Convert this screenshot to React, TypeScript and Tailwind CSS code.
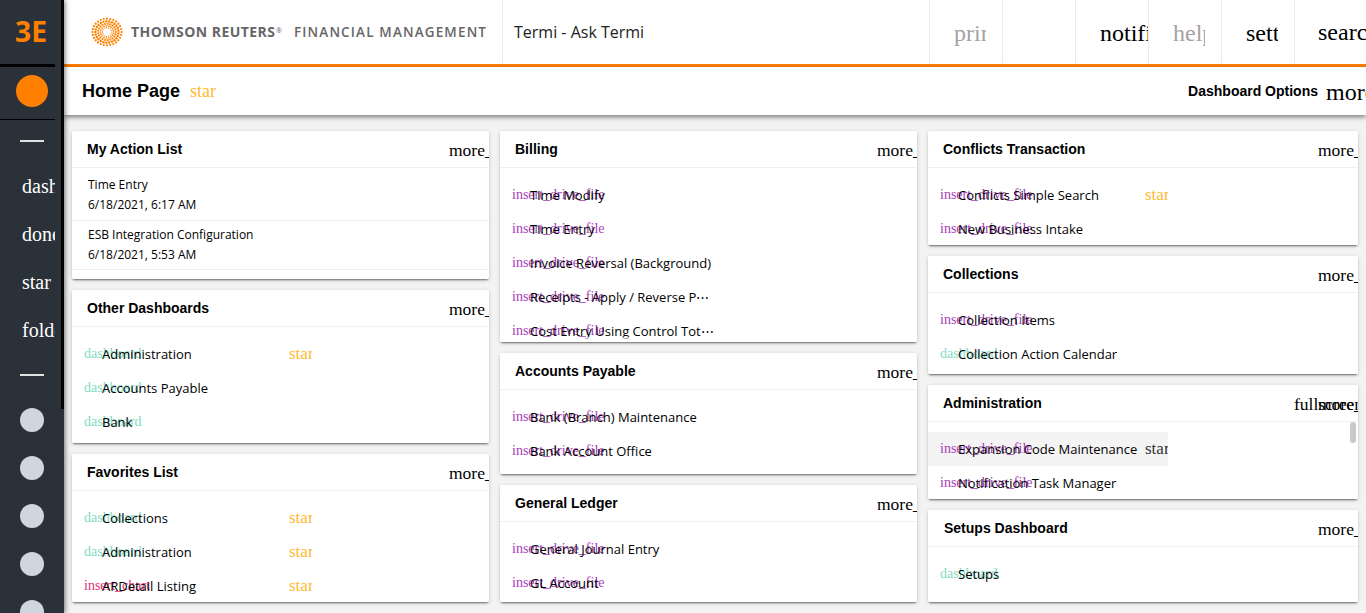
import React from "react";

type Kind = "dashboard" | "insert_drive_file" | "insert_chart";
type Item = { kind: Kind; label: string; star?: "gold" | "dark" };

const kindColor: Record<Kind, string> = {
  dashboard: "text-[#7fdcc4]",
  insert_drive_file: "text-[#a63db8]",
  insert_chart: "text-[#e0317c]",
};

const SERIF = "font-['Liberation_Serif',serif]";

function Card({
  title,
  height,
  children,
  fullscreen,
  nudge,
}: {
  title: string;
  height: string;
  children: React.ReactNode;
  fullscreen?: boolean;
  nudge?: boolean;
}) {
  return (
    <section
      className={`relative shrink-0 overflow-hidden rounded-[2px] bg-white ${height}`}
    >
      <header className="flex h-[37px] items-center justify-between overflow-hidden border-b border-[#f0f0f0] pl-[15px]">
        <h2
          className={`font-['Liberation_Sans',sans-serif] text-[14px] leading-[36px] font-bold ${nudge ? "pl-px" : ""}`}
        >
          {title}
        </h2>
        <div className={`flex text-[17.5px] leading-[18px] whitespace-nowrap pt-[2px] ${SERIF}`}>
          {fullscreen && <span className="w-6 overflow-visible">fullscreen</span>}
          <span className="w-10 overflow-hidden">more_vert</span>
        </div>
      </header>
      {children}
    </section>
  );
}

function Shadow({ children }: { children: React.ReactNode }) {
  return (
    <div className="rounded-[2px] shadow-[0_2px_2px_-1px_rgba(0,0,0,0.5),0_1px_4px_rgba(0,0,0,0.16)]">
      {children}
    </div>
  );
}

function Rows({ items }: { items: Item[] }) {
  return (
    <ul className="pt-[10px]">
      {items.map((it, i) => (
        <li
          key={i}
          className={`flex h-[34px] w-[240px] items-center overflow-hidden pl-[12px] whitespace-nowrap ${it.star === "dark" ? "bg-[#f4f4f4]" : ""}`}
        >
          <span
            className={`w-[18px] shrink-0 text-[14px] leading-[18px] ${SERIF} ${kindColor[it.kind]}`}
          >
            {it.kind}
          </span>
          <span className="relative w-[187px] shrink-0 pb-px text-[13px] leading-[18px]">
            {it.label}
          </span>
          {it.star && (
            <span
              className={`shrink-0 text-[17px] leading-[18px] ${SERIF} ${it.star === "gold" ? "text-[#ffb932]" : "text-[#333]"}`}
            >
              star
            </span>
          )}
        </li>
      ))}
    </ul>
  );
}

const file = (label: string, star?: "gold" | "dark"): Item => ({
  kind: "insert_drive_file",
  label,
  star,
});
const dash = (label: string, star?: "gold" | "dark"): Item => ({
  kind: "dashboard",
  label,
  star,
});

function Logo() {
  const rings = [
    { r: 14.5, n: 28, s: 1.1 },
    { r: 11.6, n: 25, s: 1.2 },
    { r: 8.9, n: 21, s: 1.05 },
    { r: 6.6, n: 17, s: 0.85 },
    { r: 4.7, n: 15, s: 0.6 },
  ];
  return (
    <svg width="32" height="32" viewBox="-16 -16 32 32" fill="#ff8000">
      {rings.map((g, k) =>
        Array.from({ length: g.n }, (_, i) => {
          const a = ((i + k * 0.5) / g.n) * Math.PI * 2;
          return (
            <circle
              key={`${k}-${i}`}
              cx={(g.r * Math.cos(a)).toFixed(2)}
              cy={(g.r * 0.92 * Math.sin(a)).toFixed(2)}
              r={g.s}
            />
          );
        }),
      )}
    </svg>
  );
}

function Sidebar() {
  return (
    <aside className="relative z-20 flex h-[613px] w-16 shrink-0 overflow-hidden bg-[#2a3139] shadow-[1px_0_5px_rgba(0,0,0,0.55)]">
      <div className="flex w-[55px] flex-col overflow-hidden">
        <div className="flex h-[67px] shrink-0 items-center border-b-[3px] border-black pl-[15px] font-['Open_Sans',sans-serif] text-[28px] font-bold text-[#ff8000]">
          <svg width="32" height="32" viewBox="0 0 32 32">
            <text x="0" y="26" textLength="32" lengthAdjust="spacingAndGlyphs" fontSize="28" fontWeight="700" fill="#ff8000">
              3E
            </text>
          </svg>
        </div>
        <div className="flex h-[53px] shrink-0 items-start border-b border-black pt-2 pl-4">
          <div className="size-8 rounded-full bg-[#ff8000]" />
        </div>
        <div className="mt-5 ml-5 h-[2px] w-6 shrink-0 bg-[#dfe1e3]" />
        <nav className={`mt-5 flex flex-col pl-[22px] text-[20px] text-white ${SERIF}`}>
          {["dashboard", "done", "star", "folder"].map((t) => (
            <span key={t} className="h-12 leading-[48px] whitespace-nowrap">
              {t}
            </span>
          ))}
        </nav>
        <div className="mt-5 ml-5 h-[2px] w-6 shrink-0 bg-[#dfe1e3]" />
        <div className="mt-8 ml-5 flex flex-col gap-6">
          {[0, 1, 2, 3, 4].map((i) => (
            <div key={i} className="size-6 shrink-0 rounded-full bg-[#d0d6de]" />
          ))}
        </div>
      </div>
      <div className="ml-auto h-[409px] w-[3px] bg-black" />
    </aside>
  );
}

function Tool({
  text,
  muted,
  wide,
  last,
}: {
  text: string;
  muted?: boolean;
  wide?: boolean;
  last?: boolean;
}) {
  return (
    <div
      className={`flex h-16 shrink-0 items-center overflow-hidden border-l border-[#ececec] ${last ? "w-[72px] pl-[23px]" : "w-[73px] pt-px pl-6"}`}
    >
      <span
        className={`overflow-hidden text-[24px] leading-[30px] whitespace-nowrap ${SERIF} ${wide ? "w-[49px]" : "w-8"} ${muted ? "text-[#a3a3a3]" : "text-black"}`}
      >
        {text}
      </span>
    </div>
  );
}

export default function App() {
  return (
    <div className="flex h-[613px] w-[1366px] overflow-hidden bg-[#f3f3f3] font-['Open_Sans',sans-serif] text-black">
      <Sidebar />
      <div className="flex min-w-0 flex-1 flex-col">
        <div className="flex h-[67px] shrink-0 border-b-[3px] border-[#ff8000] bg-white">
          <div className="flex w-[438px] shrink-0 items-center pl-[27px]">
            <Logo />
            <svg className="ml-2" width="360" height="24" viewBox="0 0 360 24" fill="#666">
              <text x="0" y="17" fontSize="14" fontWeight="700" textLength="144">
                THOMSON REUTERS
              </text>
              <text x="145" y="13" fontSize="7">
                ®
              </text>
              <text x="163" y="17" fontSize="13.5" fontWeight="600" textLength="192">
                FINANCIAL MANAGEMENT
              </text>
            </svg>
          </div>
          <div className="flex flex-1 items-center border-l border-[#ececec] pl-[11px] text-[16px] text-[#222]">
            Termi - Ask Termi
          </div>
          <Tool text="print" muted />
          <Tool text="" />
          <Tool text="notifications" wide />
          <Tool text="help" muted />
          <Tool text="settings" />
          <Tool text="search" wide last />
        </div>
        <div className="relative z-10 flex h-12 shrink-0 items-center bg-white pl-[18px] shadow-[0_2px_5px_rgba(0,0,0,0.5)]">
          <h1 className="font-['Liberation_Sans',sans-serif] text-[18px] font-bold">Home Page</h1>
          <span className={`ml-[10px] pt-px text-[18px] text-[#ffb932] ${SERIF}`}>star</span>
          <span className="ml-auto font-['Liberation_Sans',sans-serif] text-[14px] font-bold">
            Dashboard Options
          </span>
          <span className={`ml-2 w-10 overflow-hidden pt-[2px] text-[24px] whitespace-nowrap ${SERIF}`}>
            more_vert
          </span>
        </div>
        <main className="grid grid-cols-[417px_417px_430px] items-start gap-[11px] pt-4 pl-2">
          <div className="flex flex-col gap-[11px]">
            <Shadow>
              <Card title="My Action List" height="h-[148px]">
                {[
                  ["Time Entry", "6/18/2021, 6:17 AM", "h-[53px] pt-[7px]"],
                  ["ESB Integration Configuration", "6/18/2021, 5:53 AM", "h-[49px] pt-1"],
                ].map(([a, b, h]) => (
                  <div
                    key={a}
                    className={`border-b border-[#ececec] pl-4 text-[12px] leading-5 ${h}`}
                  >
                    <div>{a}</div>
                    <div>{b}</div>
                  </div>
                ))}
              </Card>
            </Shadow>
            <Shadow>
              <Card title="Other Dashboards" height="h-[153px]">
                <Rows items={[dash("Administration", "gold"), dash("Accounts Payable"), dash("Bank")]} />
              </Card>
            </Shadow>
            <Shadow>
              <Card title="Favorites List" height="h-[148px]">
                <Rows
                  items={[
                    dash("Collections", "gold"),
                    dash("Administration", "gold"),
                    { kind: "insert_chart", label: "ARDetail Listing", star: "gold" },
                  ]}
                />
              </Card>
            </Shadow>
          </div>
          <div className="flex flex-col gap-[11px]">
            <Shadow>
              <Card title="Billing" height="h-[211px]">
                <Rows
                  items={[
                    file("Time Modify"),
                    file("Time Entry"),
                    file("Invoice Reversal (Background)"),
                    file("Receipts - Apply / Reverse P⋯"),
                    file("Cost Entry Using Control Tot⋯"),
                  ]}
                />
                <div className="absolute inset-x-0 bottom-0 h-[5px] bg-white/60" />
              </Card>
            </Shadow>
            <Shadow>
              <Card title="Accounts Payable" height="h-[121px]">
                <Rows items={[file("Bank (Branch) Maintenance"), file("Bank Account Office")]} />
              </Card>
            </Shadow>
            <Shadow>
              <Card title="General Ledger" height="h-[117px]">
                <Rows items={[file("General Journal Entry"), file("GL Account")]} />
              </Card>
            </Shadow>
          </div>
          <div className="flex flex-col gap-[11px]">
            <Shadow>
              <Card title="Conflicts Transaction" height="h-[114px]">
                <Rows items={[file("Conflicts Simple Search", "gold"), file("New Business Intake")]} />
              </Card>
            </Shadow>
            <Shadow>
              <Card title="Collections" height="h-[118px]">
                <Rows items={[file("Collection Items"), dash("Collection Action Calendar")]} />
              </Card>
            </Shadow>
            <Shadow>
              <Card title="Administration" height="h-[114px]" fullscreen>
                <Rows
                  items={[file("Expansion Code Maintenance", "dark"), file("Notification Task Manager")]}
                />
                <div className="absolute top-[37px] right-[2px] h-[21px] w-[6px] rounded-full bg-[#c9c9c9]" />
              </Card>
            </Shadow>
            <Shadow>
              <Card title="Setups Dashboard" height="h-[92px]" nudge>
                <Rows items={[dash("Setups")]} />
              </Card>
            </Shadow>
          </div>
        </main>
      </div>
    </div>
  );
}
